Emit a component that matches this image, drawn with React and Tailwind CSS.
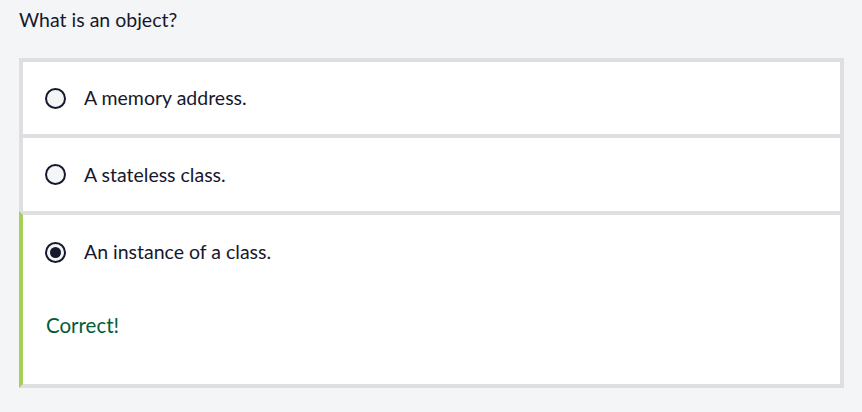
export default function App() {
  const options = [
    { label: "A memory address.", checked: false },
    { label: "A stateless class.", checked: false },
  ];
  const Radio = ({ checked }) => (
    <span className="flex h-[21px] w-[21px] shrink-0 items-center justify-center rounded-full border-2 border-[#16182d] bg-[#f4f5f7]">
      {checked && <span className="h-[11px] w-[11px] rounded-full bg-[#16182d]" />}
    </span>
  );
  return (
    <div
      className="min-h-[412px] w-full bg-[#f4f5f7] pl-[19px] pr-[18px] pt-[8px] text-[#16182d]"
      style={{ fontFamily: "Lato, 'Open Sans', sans-serif" }}
    >
      <p className="h-[24px] text-[19.5px] leading-[24px]">What is an object?</p>
      <div className="mt-[26px] flex flex-col">
        {options.map((o, i) => (
          <div
            key={i}
            className={`flex h-[80px] items-center gap-[18px] border-4 border-[#dfdfe1] bg-white pl-[22px] ${i > 0 ? "-mt-1 h-[81px]" : ""}`}
          >
            <Radio checked={o.checked} />
            <span className="text-[19.5px] leading-[24px]">{o.label}</span>
          </div>
        ))}
        <div className="-mt-1 flex h-[177px] flex-col border-4 border-[#dfdfe1] border-l-[#a5d057] bg-white pl-[22px]">
          <div className="mt-[25px] flex h-[24px] items-center gap-[18px]">
            <Radio checked />
            <span className="text-[19.5px] leading-[24px]">An instance of a class.</span>
          </div>
          <p className="mt-[49px] pl-px text-[20.5px] leading-[24px] text-[#035c3c]">Correct!</p>
        </div>
      </div>
    </div>
  );
}
